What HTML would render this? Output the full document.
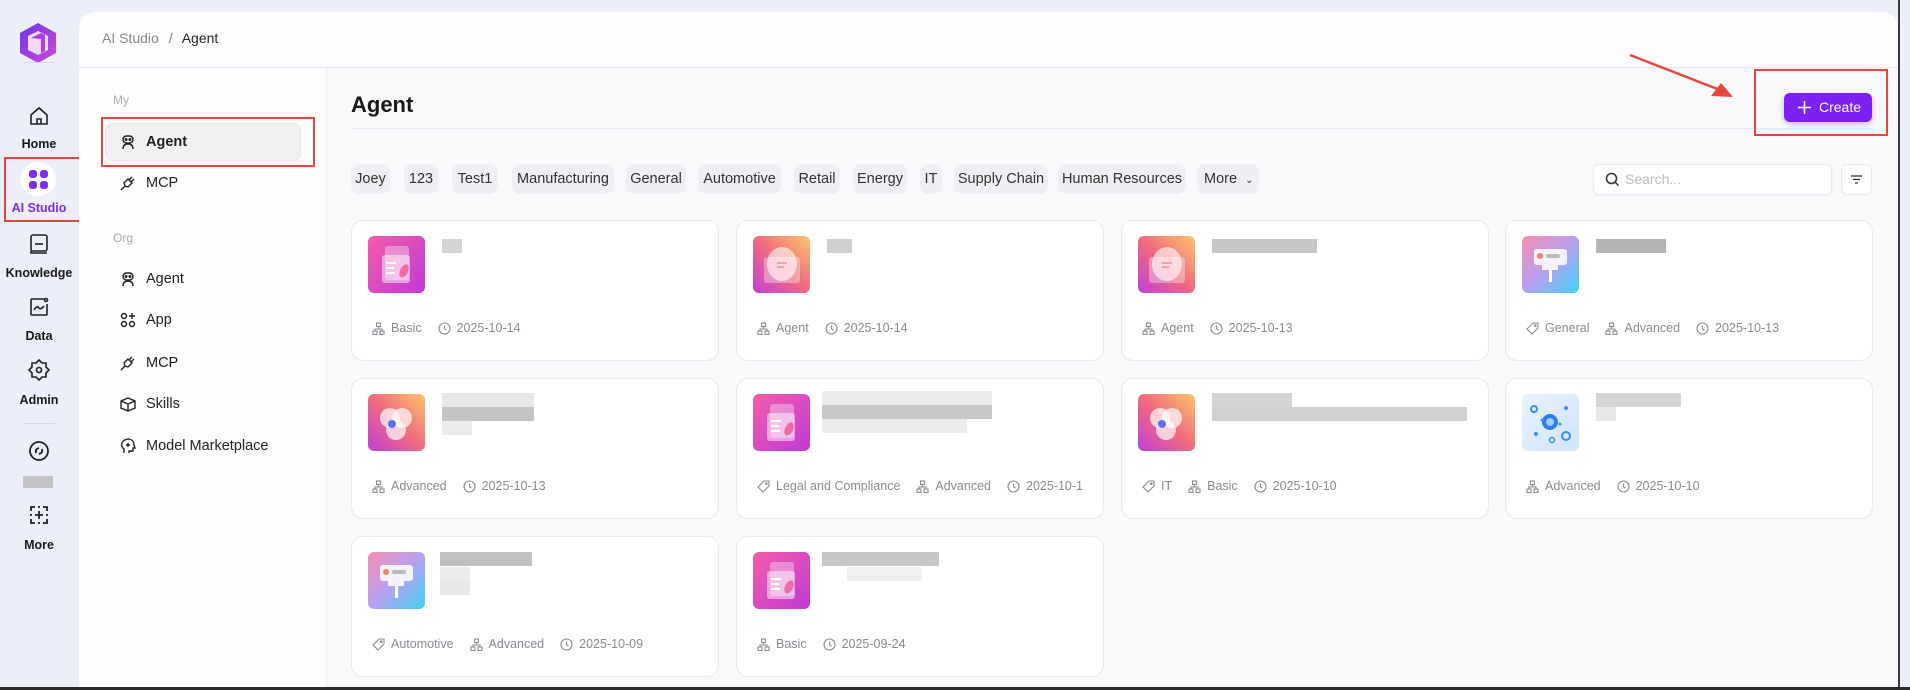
<!DOCTYPE html>
<html><head><meta charset="utf-8"><style>
*{box-sizing:border-box;margin:0;padding:0}
body{width:1910px;height:690px;overflow:hidden;background:#eceefa;font-family:"Liberation Sans",sans-serif;position:relative;color:#222}
.abs{position:absolute}
.rail-lbl{position:absolute;left:0;width:78px;text-align:center;font-size:12.5px;font-weight:bold;color:#1a1a1a}
.rail-ic{position:absolute;left:27px;width:24px;height:24px}
.panel{position:absolute;left:79px;top:12px;width:1819px;height:675px;background:#fdfdff;border-radius:16px 16px 0 0}
.side-i{position:absolute;left:146px;font-size:14.5px;color:#222;line-height:18px}
.side-ic{position:absolute;left:119px;width:18px;height:18px}
.tag{position:absolute;top:164px;height:30px;line-height:30px;background:#efeff3;border-radius:8px;font-size:14.5px;color:#333;text-align:center}
.card{position:absolute;width:368px;height:141px;background:#fff;border:1px solid #e8e8ee;border-radius:12px}
.ico{position:absolute;left:16px;top:15px;width:57px;height:57px;border-radius:6px;overflow:hidden}
.meta{position:absolute;top:96px;left:16px;display:flex;gap:8px;font-size:12.5px;color:#8a8a92;white-space:nowrap}
.meta span{display:flex;align-items:center;gap:6px;height:22px;padding:0 4px}
.meta svg{width:13px;height:13px}
.bl{position:absolute;height:14px;background:#c9c9cc}
</style></head><body>

<!-- Left rail -->
<svg class="abs" style="left:17px;top:21px" width="42" height="44" viewBox="0 0 42 44">
<defs><linearGradient id="lg" x1="0" y1="0" x2="1" y2="1"><stop offset="0" stop-color="#6a35e8"/><stop offset="1" stop-color="#d04ad8"/></linearGradient></defs>
<path d="M21 2 L39 12 L39 32 L21 42 L3 32 L3 12 Z" fill="url(#lg)"/>
<path d="M21 10 L31 15 L31 29 L21 34 L11 29 L11 15 Z" fill="#f2d9fb"/>
<path d="M14 17 L24 12 L28 14 L28 30 L24 32 L24 18 Z" fill="#b03fe0"/>
</svg>
<div class="abs" style="left:23px;top:62px;width:32px;height:1px;background:#d8d9e8"></div>
<svg class="rail-ic" style="top:104px" viewBox="0 0 24 24" fill="none" stroke="#222" stroke-width="1.6"><path d="M4 11 L12 4 L20 11 V20 H4 Z"/><path d="M10 20 V15 H14 V20"/></svg>
<div class="rail-lbl" style="top:137px">Home</div>
<div class="abs" style="left:4px;top:157px;width:81px;height:65px;border:2px solid #e8453c"></div>
<div class="abs" style="left:20px;top:162px;width:36px;height:34px;border-radius:50%;background:#fff"></div>
<svg class="abs" style="left:29px;top:170px" width="19" height="19" viewBox="0 0 19 19" fill="#7b2ff2"><rect x="0" y="0" width="8" height="8" rx="3"/><rect x="11" y="0" width="8" height="8" rx="3"/><rect x="0" y="11" width="8" height="8" rx="3"/><rect x="11" y="11" width="8" height="8" rx="3"/></svg>
<div class="rail-lbl" style="top:201px;color:#7b2ff2">AI Studio</div>
<svg class="rail-ic" style="top:232px" viewBox="0 0 24 24" fill="none" stroke="#222" stroke-width="1.6"><rect x="4" y="3" width="16" height="16" rx="2"/><path d="M4 19 V21 H20"/><path d="M8 12 H16"/></svg>
<div class="rail-lbl" style="top:266px">Knowledge</div>
<svg class="rail-ic" style="top:295px" viewBox="0 0 24 24" fill="none" stroke="#222" stroke-width="1.6"><path d="M17 4 H5 Q4 4 4 5 V19 Q4 20 5 20 H19 Q20 20 20 19 V9"/><path d="M7 15 Q10 10 12 13 Q14 15 17 11"/><circle cx="19" cy="5" r="1.5"/></svg>
<div class="rail-lbl" style="top:329px">Data</div>
<svg class="rail-ic" style="top:358px" viewBox="0 0 24 24" fill="none" stroke="#222" stroke-width="1.6"><path d="M12 2 L15 5 L19 5 L19 9 L22 12 L19 15 L19 19 L15 19 L12 22 L9 19 L5 19 L5 15 L2 12 L5 9 L5 5 L9 5 Z"/><circle cx="12" cy="12" r="2.5"/></svg>
<div class="rail-lbl" style="top:393px">Admin</div>
<div class="abs" style="left:23px;top:423px;width:32px;height:1px;background:#d8d9e8"></div>
<svg class="rail-ic" style="top:439px" viewBox="0 0 24 24" fill="none" stroke="#222" stroke-width="1.8"><circle cx="12" cy="12" r="9"/><path d="M9 14 Q8 10 12 9 M15 10 Q16 14 12 15"/></svg>
<div class="abs" style="left:23px;top:476px;width:30px;height:12px;background:#c4c4c8"></div>
<svg class="rail-ic" style="top:503px" viewBox="0 0 24 24" fill="none" stroke="#222" stroke-width="1.8"><path d="M4 8 V4 H8 M16 4 H20 V8 M20 16 V20 H16 M8 20 H4 V16 M4 11 V13 M20 11 V13 M11 4 H13 M11 20 H13"/><path d="M12 8 V16 M8 12 H16"/></svg>
<div class="rail-lbl" style="top:538px">More</div>

<!-- Main panel -->
<div class="panel"></div>
<div class="abs" style="left:102px;top:30px;font-size:14px;color:#888">AI Studio <span style="margin:0 6px">/</span> <span style="color:#222">Agent</span></div>
<div class="abs" style="left:79px;top:67px;width:1819px;height:1px;background:#e6e6ec"></div>
<div class="abs" style="left:326px;top:68px;width:1px;height:619px;background:#ececf0"></div>
<div class="abs" style="left:327px;top:68px;width:1571px;height:619px;background:#f9f9fc"></div>

<!-- Secondary sidebar -->
<div class="abs" style="left:113px;top:93px;font-size:12px;color:#aaa">My</div>
<div class="abs" style="left:105px;top:123px;width:196px;height:38px;background:#f1f1f4;border:1px solid #e4e4e8;border-radius:8px"></div>
<div class="abs" style="left:101px;top:117px;width:214px;height:50px;border:2px solid #e8453c"></div>
<svg class="side-ic" style="top:133px" viewBox="0 0 18 18" fill="none" stroke="#222" stroke-width="1.4"><rect x="4" y="3" width="10" height="7" rx="3.5"/><circle cx="7" cy="6.5" r=".8"/><circle cx="11" cy="6.5" r=".8"/><path d="M4 16 Q4 11 9 11 Q14 11 14 16"/></svg>
<div class="side-i" style="top:133px;font-weight:bold">Agent</div>
<svg class="side-ic" style="top:174px" viewBox="0 0 18 18" fill="none" stroke="#222" stroke-width="1.4"><path d="M2 16 L6 12 M6 12 L5 9 L9 5 L13 9 L9 13 Z M10 6 L13 3 M12 8 L15 5"/></svg>
<div class="side-i" style="top:174px">MCP</div>
<div class="abs" style="left:113px;top:231px;font-size:12px;color:#aaa">Org</div>
<svg class="side-ic" style="top:270px" viewBox="0 0 18 18" fill="none" stroke="#222" stroke-width="1.4"><rect x="4" y="3" width="10" height="7" rx="3.5"/><circle cx="7" cy="6.5" r=".8"/><circle cx="11" cy="6.5" r=".8"/><path d="M4 16 Q4 11 9 11 Q14 11 14 16"/></svg>
<div class="side-i" style="top:270px">Agent</div>
<svg class="side-ic" style="top:311px" viewBox="0 0 18 18" fill="none" stroke="#222" stroke-width="1.4"><circle cx="5" cy="5" r="2.5"/><circle cx="5" cy="13" r="2.5"/><circle cx="13" cy="13" r="2.5"/><path d="M13 2 V8 M10 5 H16"/></svg>
<div class="side-i" style="top:311px">App</div>
<svg class="side-ic" style="top:354px" viewBox="0 0 18 18" fill="none" stroke="#222" stroke-width="1.4"><path d="M2 16 L6 12 M6 12 L5 9 L9 5 L13 9 L9 13 Z M10 6 L13 3 M12 8 L15 5"/></svg>
<div class="side-i" style="top:354px">MCP</div>
<svg class="side-ic" style="top:395px" viewBox="0 0 18 18" fill="none" stroke="#222" stroke-width="1.4"><path d="M2 6 L9 3 L16 6 L16 13 L9 16 L2 13 Z M2 6 L9 9 L16 6 M9 9 V16"/></svg>
<div class="side-i" style="top:395px">Skills</div>
<svg class="side-ic" style="top:437px" viewBox="0 0 18 18" fill="none" stroke="#222" stroke-width="1.4"><path d="M5 16 V12 Q2 10 3 6 Q5 2 10 2 Q15 3 15 8 L16 11 H14 V14 H10 V16"/><path d="M9 6 V10 M7 8 H11"/></svg>
<div class="side-i" style="top:437px">Model Marketplace</div>

<!-- Header -->
<div class="abs" style="left:351px;top:92px;font-size:22px;font-weight:bold;color:#1a1a1a">Agent</div>
<div class="abs" style="left:351px;top:128px;width:1522px;height:1px;background:#e8e8ee"></div>
<div class="abs" style="left:1784px;top:93px;width:88px;height:29px;background:#7b22f2;border-radius:6px;color:#fff;font-size:14px;line-height:29px;padding-left:35px;box-shadow:0 2px 6px rgba(123,34,242,.35)">Create</div>
<svg class="abs" style="left:1797px;top:100px" width="15" height="15" viewBox="0 0 15 15" stroke="#fff" stroke-width="1.6"><path d="M7.5 1 V14 M1 7.5 H14"/></svg>
<div class="abs" style="left:1754px;top:69px;width:134px;height:67px;border:2px solid #e8453c"></div>
<svg class="abs" style="left:1625px;top:50px" width="115" height="52" viewBox="0 0 115 52"><path d="M5 5 L95 40" stroke="#e8453c" stroke-width="2.5"/><path d="M108 47 L86 46 L96 33 Z" fill="#e8453c"/></svg>

<!-- Tags -->
<div class="tag" style="left:351px;width:39px">Joey</div>
<div class="tag" style="left:404px;width:34px">123</div>
<div class="tag" style="left:452px;width:46px">Test1</div>
<div class="tag" style="left:512px;width:102px">Manufacturing</div>
<div class="tag" style="left:626px;width:60px">General</div>
<div class="tag" style="left:698px;width:83px">Automotive</div>
<div class="tag" style="left:794px;width:46px">Retail</div>
<div class="tag" style="left:853px;width:54px">Energy</div>
<div class="tag" style="left:920px;width:22px">IT</div>
<div class="tag" style="left:954px;width:94px">Supply Chain</div>
<div class="tag" style="left:1058px;width:128px">Human Resources</div>
<div class="tag" style="left:1197px;width:62px;text-align:left;padding-left:7px">More <span style="font-size:10px;margin-left:4px">&#8964;</span></div>
<div class="abs" style="left:1593px;top:164px;width:239px;height:31px;background:#fff;border:1px solid #e8e8ee;border-radius:7px;box-shadow:0 1px 3px rgba(0,0,0,.06)"></div>
<svg class="abs" style="left:1605px;top:172px" width="15" height="15" viewBox="0 0 15 15" fill="none" stroke="#333" stroke-width="1.5"><circle cx="6.5" cy="6.5" r="5"/><path d="M10 10 L13.5 13.5"/></svg>
<div class="abs" style="left:1625px;top:171px;font-size:14px;color:#bbb">Search...</div>
<div class="abs" style="left:1841px;top:164px;width:31px;height:31px;background:#fff;border:1px solid #e8e8ee;border-radius:7px"></div>
<svg class="abs" style="left:1850px;top:173px" width="13" height="13" viewBox="0 0 13 13" stroke="#333" stroke-width="1.3"><path d="M1 3 H12 M3 6.5 H10 M5 10 H8"/></svg>

<svg width="0" height="0" style="position:absolute">
<defs>
<linearGradient id="gp" x1="0" y1="0" x2="1" y2="1"><stop offset="0" stop-color="#f25ca8"/><stop offset="1" stop-color="#c23ad6"/></linearGradient>
<linearGradient id="go" x1="1" y1="0" x2="0" y2="1"><stop offset="0" stop-color="#fdc56a"/><stop offset=".5" stop-color="#f06a7e"/><stop offset="1" stop-color="#c13fd8"/></linearGradient>
<linearGradient id="gr" x1="0" y1="0" x2="1" y2="1"><stop offset="0" stop-color="#f78fb3"/><stop offset=".5" stop-color="#b6a0f0"/><stop offset="1" stop-color="#3fd3f5"/></linearGradient>
<linearGradient id="gb" x1="0" y1="0" x2="1" y2="1"><stop offset="0" stop-color="#e8f3ff"/><stop offset="1" stop-color="#cfe3fb"/></linearGradient>
<symbol id="faq" viewBox="0 0 57 57"><rect width="57" height="57" fill="url(#gp)"/><rect x="17" y="10" width="24" height="34" rx="3" fill="#fff" opacity=".35"/><rect x="14" y="19" width="28" height="28" rx="3" fill="#fff" opacity=".5"/><path d="M18 27 H28 M18 32 H26 M18 37 H27" stroke="#fff" stroke-width="2"/><ellipse cx="36" cy="35" rx="4" ry="7" fill="#f36aa0" transform="rotate(25 36 35)"/></symbol>
<symbol id="egg" viewBox="0 0 57 57"><rect width="57" height="57" fill="url(#go)"/><rect x="11" y="21" width="36" height="26" rx="3" fill="#fff" opacity=".35"/><ellipse cx="29" cy="28" rx="15" ry="17" fill="#fff" opacity=".6"/><path d="M24 27 H34 M24 31 H31" stroke="#f0a0b0" stroke-width="2"/></symbol>
<symbol id="flower" viewBox="0 0 57 57"><rect width="57" height="57" fill="url(#go)"/><circle cx="22" cy="24" r="10" fill="#fff" opacity=".7"/><circle cx="34" cy="24" r="10" fill="#fff" opacity=".7"/><circle cx="28" cy="36" r="10" fill="#fff" opacity=".7"/><circle cx="24" cy="30" r="4" fill="#5b6ef0"/></symbol>
<symbol id="sign" viewBox="0 0 57 57"><rect width="57" height="57" fill="url(#gr)"/><rect x="12" y="13" width="33" height="16" rx="3" fill="#fff" opacity=".85"/><circle cx="18" cy="20" r="3" fill="#f0845a"/><rect x="24" y="18" width="14" height="4" rx="2" fill="#bbb"/><rect x="20" y="29" width="16" height="5" fill="#fff" opacity=".85"/><rect x="27" y="34" width="3" height="12" fill="#fff"/></symbol>
<symbol id="bub" viewBox="0 0 57 57"><rect width="57" height="57" fill="url(#gb)"/><circle cx="28" cy="28" r="8" fill="#2b7cf0"/><circle cx="28" cy="28" r="4" fill="#9fd0ff"/><circle cx="12" cy="15" r="3" fill="none" stroke="#3a8af0" stroke-width="2"/><circle cx="44" cy="42" r="4" fill="none" stroke="#3a8af0" stroke-width="2"/><circle cx="14" cy="40" r="2" fill="#3a8af0"/><circle cx="44" cy="14" r="2" fill="#3a8af0"/><circle cx="20" cy="26" r="1.5" fill="#3a8af0"/><circle cx="38" cy="30" r="1.5" fill="#3a8af0"/><circle cx="30" cy="46" r="2.5" fill="none" stroke="#3a8af0" stroke-width="1.5"/></symbol>
<symbol id="mOrg" viewBox="0 0 13 13"><g fill="none" stroke="#8a8a92" stroke-width="1.1"><rect x="4.5" y="1" width="4" height="3.5"/><rect x="1" y="9" width="4" height="3.5"/><rect x="8" y="9" width="4" height="3.5"/><path d="M6.5 4.5 V7 M3 9 V7 H10 V9"/></g></symbol>
<symbol id="mClk" viewBox="0 0 13 13"><g fill="none" stroke="#8a8a92" stroke-width="1.1"><circle cx="6.5" cy="6.5" r="5.5"/><path d="M6.5 3.5 V6.8 L8.5 8"/></g></symbol>
<symbol id="mTag" viewBox="0 0 13 13"><g fill="none" stroke="#8a8a92" stroke-width="1.1"><path d="M7 1 H12 V6 L6 12 L1 7 Z"/><circle cx="9.3" cy="3.7" r=".8"/></g></symbol>
</defs></svg>

<!-- Row 1 -->
<div class="card" style="left:351px;top:220px"><svg class="ico"><use href="#faq"/></svg><div class="bl" style="left:90px;top:18px;width:20px;background:#d4d4d6"></div><div class="meta"><span><svg><use href="#mOrg"/></svg>Basic</span><span><svg><use href="#mClk"/></svg>2025-10-14</span></div></div>
<div class="card" style="left:736px;top:220px"><svg class="ico"><use href="#egg"/></svg><div class="bl" style="left:90px;top:18px;width:25px;background:#cfcfd2"></div><div class="meta"><span><svg><use href="#mOrg"/></svg>Agent</span><span><svg><use href="#mClk"/></svg>2025-10-14</span></div></div>
<div class="card" style="left:1121px;top:220px"><svg class="ico"><use href="#egg"/></svg><div class="bl" style="left:90px;top:18px;width:105px;background:#c6c6c9"></div><div class="meta"><span><svg><use href="#mOrg"/></svg>Agent</span><span><svg><use href="#mClk"/></svg>2025-10-13</span></div></div>
<div class="card" style="left:1505px;top:220px"><svg class="ico"><use href="#sign"/></svg><div class="bl" style="left:90px;top:18px;width:70px;background:#b4b4b7"></div><div class="meta"><span><svg><use href="#mTag"/></svg>General</span><span><svg><use href="#mOrg"/></svg>Advanced</span><span><svg><use href="#mClk"/></svg>2025-10-13</span></div></div>

<!-- Row 2 -->
<div class="card" style="left:351px;top:378px"><svg class="ico"><use href="#flower"/></svg><div class="bl" style="left:90px;top:14px;width:92px;background:#e6e6e8"></div><div class="bl" style="left:90px;top:28px;width:92px;background:#c4c4c7"></div><div class="bl" style="left:90px;top:42px;width:30px;background:#ececee"></div><div class="meta"><span><svg><use href="#mOrg"/></svg>Advanced</span><span><svg><use href="#mClk"/></svg>2025-10-13</span></div></div>
<div class="card" style="left:736px;top:378px"><svg class="ico"><use href="#faq"/></svg><div class="bl" style="left:85px;top:12px;width:170px;background:#ececee"></div><div class="bl" style="left:85px;top:26px;width:170px;background:#c8c8cb"></div><div class="bl" style="left:85px;top:40px;width:145px;background:#ececee"></div><div class="meta" style="width:338px;overflow:hidden"><span><svg><use href="#mTag"/></svg>Legal and Compliance</span><span><svg><use href="#mOrg"/></svg>Advanced</span><span><svg><use href="#mClk"/></svg>2025-10-1</span></div></div>
<div class="card" style="left:1121px;top:378px"><svg class="ico"><use href="#flower"/></svg><div class="bl" style="left:90px;top:14px;width:80px;background:#d4d4d6"></div><div class="bl" style="left:90px;top:28px;width:255px;background:#d0d0d3"></div><div class="meta"><span><svg><use href="#mTag"/></svg>IT</span><span><svg><use href="#mOrg"/></svg>Basic</span><span><svg><use href="#mClk"/></svg>2025-10-10</span></div></div>
<div class="card" style="left:1505px;top:378px"><svg class="ico"><use href="#bub"/></svg><div class="bl" style="left:90px;top:14px;width:85px;background:#d4d4d6"></div><div class="bl" style="left:90px;top:28px;width:20px;background:#e8e8ea"></div><div class="meta"><span><svg><use href="#mOrg"/></svg>Advanced</span><span><svg><use href="#mClk"/></svg>2025-10-10</span></div></div>

<!-- Row 3 -->
<div class="card" style="left:351px;top:536px"><svg class="ico"><use href="#sign"/></svg><div class="bl" style="left:88px;top:15px;width:92px;background:#c0c0c3"></div><div class="bl" style="left:88px;top:30px;width:30px;background:#ececee"></div><div class="bl" style="left:88px;top:44px;width:30px;background:#e8e8ea"></div><div class="meta"><span><svg><use href="#mTag"/></svg>Automotive</span><span><svg><use href="#mOrg"/></svg>Advanced</span><span><svg><use href="#mClk"/></svg>2025-10-09</span></div></div>
<div class="card" style="left:736px;top:536px"><svg class="ico"><use href="#faq"/></svg><div class="bl" style="left:85px;top:15px;width:117px;background:#c6c6c9"></div><div class="bl" style="left:110px;top:30px;width:75px;background:#f0f0f2"></div><div class="meta"><span><svg><use href="#mOrg"/></svg>Basic</span><span><svg><use href="#mClk"/></svg>2025-09-24</span></div></div>

<div class="abs" style="left:1898px;top:0;width:2px;height:690px;background:#3a3a3a"></div>
<div class="abs" style="left:0;top:687px;width:1910px;height:3px;background:#2a2a2a"></div>
</body></html>
